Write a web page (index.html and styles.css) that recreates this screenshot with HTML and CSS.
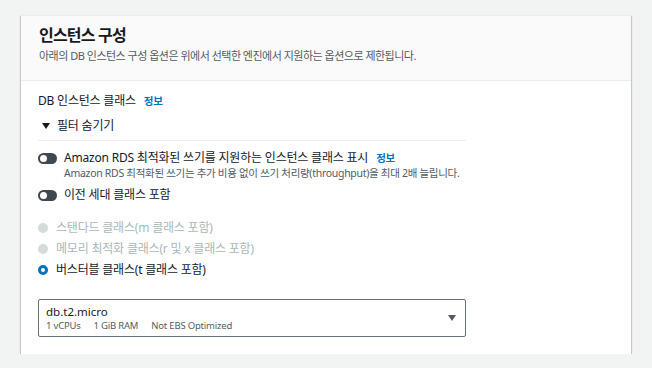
FILE: index.html
```html
<!DOCTYPE html>
<html lang="ko">
<head>
<meta charset="utf-8">
<link rel="stylesheet" href="styles.css">
</head>
<body>
<div class="card">
  <div class="card-header">
    <h2 class="title">인스턴스 구성</h2>
    <p class="subtitle">아래의 DB 인스턴스 구성 옵션은 위에서 선택한 엔진에서 지원하는 옵션으로 제한됩니다.</p>
  </div>
  <div class="card-body">
    <div class="field-label">DB 인스턴스 클래스 <a class="info">정보</a></div>
    <div class="filter-toggle"><span class="caret"></span>필터 숨기기</div>
    <div class="divider"></div>
    <div class="toggle-row">
      <span class="toggle"><span class="knob"></span></span>
      <div class="toggle-text">
        <div class="toggle-label">Amazon RDS 최적화된 쓰기를 지원하는 인스턴스 클래스 표시 <a class="info">정보</a></div>
        <div class="toggle-desc">Amazon RDS 최적화된 쓰기는 추가 비용 없이 쓰기 처리량(throughput)을 최대 2배 늘립니다.</div>
      </div>
    </div>
    <div class="toggle-row second">
      <span class="toggle"><span class="knob"></span></span>
      <div class="toggle-text">
        <div class="toggle-label">이전 세대 클래스 포함</div>
      </div>
    </div>
    <div class="radios">
      <div class="radio disabled"><span class="dot"></span>스탠다드 클래스(m 클래스 포함)</div>
      <div class="radio disabled"><span class="dot"></span>메모리 최적화 클래스(r 및 x 클래스 포함)</div>
      <div class="radio checked"><span class="dot"></span>버스터블 클래스(t 클래스 포함)</div>
    </div>
    <div class="select">
      <div class="select-text">
        <div class="select-value">db.t2.micro</div>
        <div class="select-tags"><span>1 vCPUs</span><span>1 GiB RAM</span><span>Not EBS Optimized</span></div>
      </div>
      <span class="select-caret"></span>
    </div>
  </div>
</div>
</body>
</html>
```
FILE: styles.css
```css
* { box-sizing: border-box; }
html, body { margin: 0; padding: 0; }
body {
  background: #f2f3f3;
  font-family: "Noto Sans", "Noto Sans CJK KR", sans-serif;
  color: #16191f;
  padding: 15px 21px 0 21px;
}
.card {
  background: #ffffff;
  box-shadow: 0 1px 1px 0 rgba(0,28,36,0.3), 1px 1px 1px 0 rgba(0,28,36,0.15), -1px 1px 1px 0 rgba(0,28,36,0.15);
  border-top: 1px solid #eaeded;
  width: 610px;
}
.card-header {
  background: #fafafa;
  border-bottom: 1px solid #eaeded;
  padding: 9px 18px 0 18px;
  height: 65px;
}
.title {
  margin: 0;
  font-size: 16px;
  font-weight: 700;
  line-height: 20px;
  letter-spacing: -0.8px;
}
.subtitle {
  margin: 3px 0 0 0;
  font-size: 11px;
  line-height: 16px;
  color: #545b64;
  letter-spacing: -0.5px;
}
.card-body {
  padding: 12px 17px 17px 17px;
}
.field-label {
  font-size: 12px;
  line-height: 16px;
  letter-spacing: -0.2px;
}
.info {
  color: #0073bb;
  font-weight: 700;
  font-size: 10.5px;
  margin-left: 5px;
}
.filter-toggle {
  margin-top: 9px;
  font-size: 12px;
  line-height: 16px;
  letter-spacing: -0.2px;
  color: #16191f;
  display: flex;
  align-items: center;
}
.caret {
  width: 0; height: 0;
  border-left: 4px solid transparent;
  border-right: 4px solid transparent;
  border-top: 6px solid #16191f;
  margin: 0 7px 0 4px;
}
.divider {
  width: 428px;
  height: 1px;
  background: #eaeded;
  margin-top: 6px;
}
.toggle-row {
  display: flex;
  align-items: flex-start;
  margin-top: 9px;
}
.toggle-row.second { margin-top: 7px; }
.toggle {
  width: 19px;
  height: 11px;
  border-radius: 6px;
  background: #414750;
  position: relative;
  margin-top: 3px;
  margin-right: 7px;
  flex: none;
}
.knob {
  position: absolute;
  left: 2px; top: 2px;
  width: 7px; height: 7px;
  border-radius: 50%;
  background: #fff;
}
.toggle-label {
  font-size: 12px;
  line-height: 16px;
  letter-spacing: -0.2px;
}
.toggle-desc {
  font-size: 10.5px;
  line-height: 14px;
  color: #545b64;
  letter-spacing: -0.3px;
}
.radios {
  margin-top: 16px;
  display: flex;
  flex-direction: column;
  gap: 4px;
}
.radio {
  display: flex;
  align-items: center;
  font-size: 12px;
  line-height: 17px;
  letter-spacing: -0.2px;
}
.dot {
  width: 10px; height: 10px;
  border-radius: 50%;
  margin-right: 8px;
  flex: none;
}
.radio.disabled { color: #aab7b8; }
.radio.disabled .dot { background: #d5dbdb; }
.radio.checked .dot {
  background: #fff;
  border: 3px solid #0073bb;
}
.select {
  margin-top: 21px;
  width: 428px;
  height: 38px;
  border: 1px solid #687078;
  border-radius: 2px;
  display: flex;
  align-items: center;
  justify-content: space-between;
  padding: 0 9px 0 7px;
}
.select-value {
  font-size: 11.5px;
  line-height: 15px;
  color: #16191f;
}
.select-tags {
  font-size: 9.5px;
  line-height: 13px;
  color: #545b64;
  display: flex;
  gap: 13px;
  letter-spacing: -0.2px;
}
.select-caret {
  width: 0; height: 0;
  border-left: 4px solid transparent;
  border-right: 4px solid transparent;
  border-top: 6px solid #545b64;
}
```
